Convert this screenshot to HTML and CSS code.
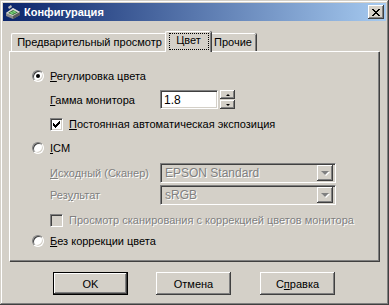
FILE: index.html
```html
<!DOCTYPE html>
<html lang="ru">
<head>
    <meta charset="UTF-8">
    <title>Конфигурация</title>
    <link rel="stylesheet" href="styles.css">
</head>
<body>
    <div class="window">
        <div class="titlebar">
            <svg class="app-icon" width="16" height="16" viewBox="0 0 16 16">
                <path d="M1 9 L8 4 L15 8 L15 11 L8 15 L1 12 Z" fill="#8c8c8c"/>
                <path d="M1 9 L8 4 L15 8 L8 12 Z" fill="#d8d8d8"/>
                <path d="M3 9 L8 6 L13 8.5 L8 11 Z" fill="#3a6a3a"/>
                <path d="M5 9 L10 7 M6 10 L11 8" stroke="#7ee07e" stroke-width="1"/>
                <path d="M8 12 L15 8 L15 11 L8 15 Z" fill="#5a5a5a"/>
                <path d="M3 3 L6 1 L7 3 L4 5 Z" fill="#c0c0c0"/>
            </svg>
            <span class="title">Конфигурация</span>
            <div class="close-btn">
                <svg width="8" height="7" viewBox="0 0 8 7">
                    <path d="M0 0h2v1h1v1h2v-1h1v-1h2v1h-1v1h-1v1h-1v1h1v1h1v1h1v1h-2v-1h-1v-1h-2v1h-1v1h-2v-1h1v-1h1v-1h1v-1h-1v-1h-1v-1h-1z" fill="#000"/>
                </svg>
            </div>
        </div>

        <div class="body">
            <div class="tabs">
                <div class="tab tab-preview">Предварительный просмотр</div>
                <div class="tab tab-color active"><span class="focus">Цвет</span></div>
                <div class="tab tab-other">Прочие</div>
            </div>

            <div class="panel">
                <div class="row row-radio1">
                    <span class="radio checked"></span>
                    <span class="label"><u>Р</u>егулировка цвета</span>
                </div>
                <div class="row row-gamma">
                    <span class="field-label"><u>Г</u>амма монитора</span>
                    <span class="edit">1.8</span>
                    <span class="spin">
                        <span class="spin-btn"><i class="arrow-up"></i></span>
                        <span class="spin-btn"><i class="arrow-down"></i></span>
                    </span>
                </div>
                <div class="row row-check1">
                    <span class="check checked">
                        <svg width="7" height="7" viewBox="0 0 7 7">
                            <path d="M0 2h1v1h1v1h1v-1h1v-1h1v-1h1v-1h1v3h-1v1h-1v1h-1v1h-1v1h-1v-1h-1v-1h-1v-1h-1z" fill="#000"/>
                        </svg>
                    </span>
                    <span class="label"><u>П</u>остоянная автоматическая экспозиция</span>
                </div>
                <div class="row row-icm">
                    <span class="radio"></span>
                    <span class="label"><u>I</u>CM</span>
                </div>
                <div class="row row-source">
                    <span class="field-label disabled"><u>И</u>сходный (Сканер)</span>
                    <span class="combo">
                        <span class="combo-text">EPSON Standard</span>
                        <span class="combo-btn"><i class="arrow-down big"></i></span>
                    </span>
                </div>
                <div class="row row-result">
                    <span class="field-label disabled">Рез<u>у</u>льтат</span>
                    <span class="combo">
                        <span class="combo-text">sRGB</span>
                        <span class="combo-btn"><i class="arrow-down big"></i></span>
                    </span>
                </div>
                <div class="row row-check2">
                    <span class="check disabled-box"></span>
                    <span class="label disabled">Просмотр сканирования с коррекцией цветов монитора</span>
                </div>
                <div class="row row-radio3">
                    <span class="radio"></span>
                    <span class="label"><u>Б</u>ез коррекции цвета</span>
                </div>
            </div>

            <div class="buttons">
                <div class="btn default">OK</div>
                <div class="btn">Отмена</div>
                <div class="btn">С<u>п</u>равка</div>
            </div>
        </div>
    </div>
</body>
</html>
```

FILE: styles.css
```css
body {
    margin: 0;
    background-color: #d4d0c8;
    font-family: "Liberation Sans", Arial, sans-serif;
    font-size: 11px;
    color: #000;
}
u {
    text-decoration: underline;
    text-underline-offset: 1px;
}
.window {
    box-sizing: border-box;
    width: 389px;
    height: 305px;
    padding: 3px;
    background-color: #d4d0c8;
    box-shadow: inset -1px -1px #404040, inset 1px 1px #d4d0c8,
                inset -2px -2px #808080, inset 2px 2px #fff;
}
.titlebar {
    height: 18px;
    display: flex;
    align-items: center;
    background: linear-gradient(to right, #0a246a, #a6caf0);
    color: #fff;
}
.app-icon {
    margin-left: 2px;
    margin-right: 3px;
}
.title {
    font-weight: bold;
    font-size: 11px;
    flex: 1;
}
.close-btn {
    box-sizing: border-box;
    width: 16px;
    height: 14px;
    margin-right: 2px;
    display: flex;
    align-items: center;
    justify-content: center;
    background-color: #d4d0c8;
    box-shadow: inset -1px -1px #404040, inset 1px 1px #fff,
                inset -2px -2px #808080;
}
.body {
    padding-top: 10px;
}
.tabs {
    height: 20px;
    display: flex;
    align-items: flex-end;
    padding-left: 8px;
}
.tab {
    box-sizing: border-box;
    height: 18px;
    padding-top: 2px;
    text-align: center;
    border-top: 1px solid #fff;
    border-left: 1px solid #fff;
    border-top-left-radius: 2px;
    border-top-right-radius: 2px;
    box-shadow: inset -1px 0 #808080, 1px 0 #404040;
}
.tab-preview {
    width: 156px;
}
.tab-color {
    width: 46px;
}
.tab-other {
    width: 47px;
}
.tab.active {
    position: relative;
    z-index: 1;
    height: 21px;
    margin: 0 -2px -1px -2px;
    padding-top: 1px;
    background-color: #d4d0c8;
}
.focus {
    display: inline-block;
    box-sizing: border-box;
    width: 40px;
    height: 17px;
    padding-top: 1px;
    outline: 1px dotted #000;
    outline-offset: -1px;
}
.panel {
    box-sizing: border-box;
    width: 370px;
    height: 210px;
    margin-left: 6px;
    padding: 15px 0 0 22px;
    border-top: 1px solid #fff;
    border-left: 1px solid #fff;
    box-shadow: inset -1px -1px #808080, 1px 1px #404040;
}
.row {
    display: flex;
    align-items: center;
}
.row-radio1 {
    height: 18px;
}
.row-gamma {
    height: 19px;
    margin-top: 5px;
    padding-left: 18px;
}
.row-check1 {
    height: 16px;
    margin-top: 7px;
    padding-left: 18px;
}
.row-icm {
    height: 16px;
    margin-top: 8px;
}
.row-source {
    height: 20px;
    margin-top: 7px;
    padding-left: 18px;
}
.row-result {
    height: 20px;
    margin-top: 2px;
    padding-left: 18px;
}
.row-check2 {
    height: 16px;
    margin-top: 7px;
    padding-left: 18px;
}
.row-radio3 {
    height: 16px;
    margin-top: 5px;
}
.label {
    margin-left: 6px;
    white-space: nowrap;
}
.field-label {
    width: 110px;
    white-space: nowrap;
}
.disabled {
    color: #808080;
    text-shadow: 1px 1px #fff;
}
.radio {
    position: relative;
    box-sizing: border-box;
    width: 12px;
    height: 12px;
    border-radius: 50%;
    background-color: #fff;
    border: 1px solid;
    border-color: #808080 #fff #fff #808080;
    box-shadow: inset 1px 1px #404040, inset -1px -1px #d4d0c8;
}
.radio.checked::after {
    content: "";
    position: absolute;
    left: 3px;
    top: 3px;
    width: 4px;
    height: 4px;
    border-radius: 50%;
    background-color: #000;
}
.check {
    box-sizing: border-box;
    width: 13px;
    height: 13px;
    display: flex;
    align-items: center;
    justify-content: center;
    background-color: #fff;
    border: 1px solid;
    border-color: #808080 #fff #fff #808080;
    box-shadow: inset 1px 1px #404040, inset -1px -1px #d4d0c8;
}
.check.disabled-box {
    background-color: #d4d0c8;
}
.edit {
    box-sizing: border-box;
    width: 58px;
    height: 19px;
    padding: 2px 0 0 3px;
    font-size: 12px;
    background-color: #fff;
    border: 1px solid;
    border-color: #808080 #fff #fff #808080;
    box-shadow: inset 1px 1px #404040, inset -1px -1px #d4d0c8;
}
.spin {
    display: flex;
    flex-direction: column;
    gap: 1px;
    margin-left: 2px;
}
.spin-btn {
    box-sizing: border-box;
    width: 15px;
    height: 9px;
    display: flex;
    align-items: center;
    justify-content: center;
    box-shadow: inset -1px -1px #404040, inset 1px 1px #fff,
                inset -2px -2px #808080;
}
.arrow-up,
.arrow-down {
    width: 0;
    height: 0;
    border-left: 2px solid transparent;
    border-right: 2px solid transparent;
}
.arrow-up {
    border-bottom: 2px solid #000;
}
.arrow-down {
    border-top: 2px solid #000;
}
.arrow-down.big {
    border-left-width: 4px;
    border-right-width: 4px;
    border-top: 4px solid #808080;
    filter: drop-shadow(1px 1px 0 #fff);
}
.combo {
    box-sizing: border-box;
    width: 176px;
    height: 20px;
    display: flex;
    align-items: center;
    padding: 2px;
    background-color: #d4d0c8;
    border: 1px solid;
    border-color: #808080 #fff #fff #808080;
    box-shadow: inset 1px 1px #404040, inset -1px -1px #d4d0c8;
}
.combo-text {
    flex: 1;
    padding-left: 2px;
    font-size: 12px;
    color: #808080;
    text-shadow: 1px 1px #fff;
}
.combo-btn {
    box-sizing: border-box;
    width: 16px;
    height: 16px;
    display: flex;
    align-items: center;
    justify-content: center;
    box-shadow: inset -1px -1px #404040, inset 1px 1px #fff,
                inset -2px -2px #808080;
}
.buttons {
    display: flex;
    margin-top: 11px;
    padding-left: 50px;
    gap: 28px;
}
.btn {
    box-sizing: border-box;
    width: 75px;
    height: 23px;
    display: flex;
    align-items: center;
    justify-content: center;
    box-shadow: inset -1px -1px #404040, inset 1px 1px #fff,
                inset -2px -2px #808080;
}
.btn.default {
    border: 1px solid #000;
}
.btn + .btn + .btn {
    margin-left: 1px;
}
```
